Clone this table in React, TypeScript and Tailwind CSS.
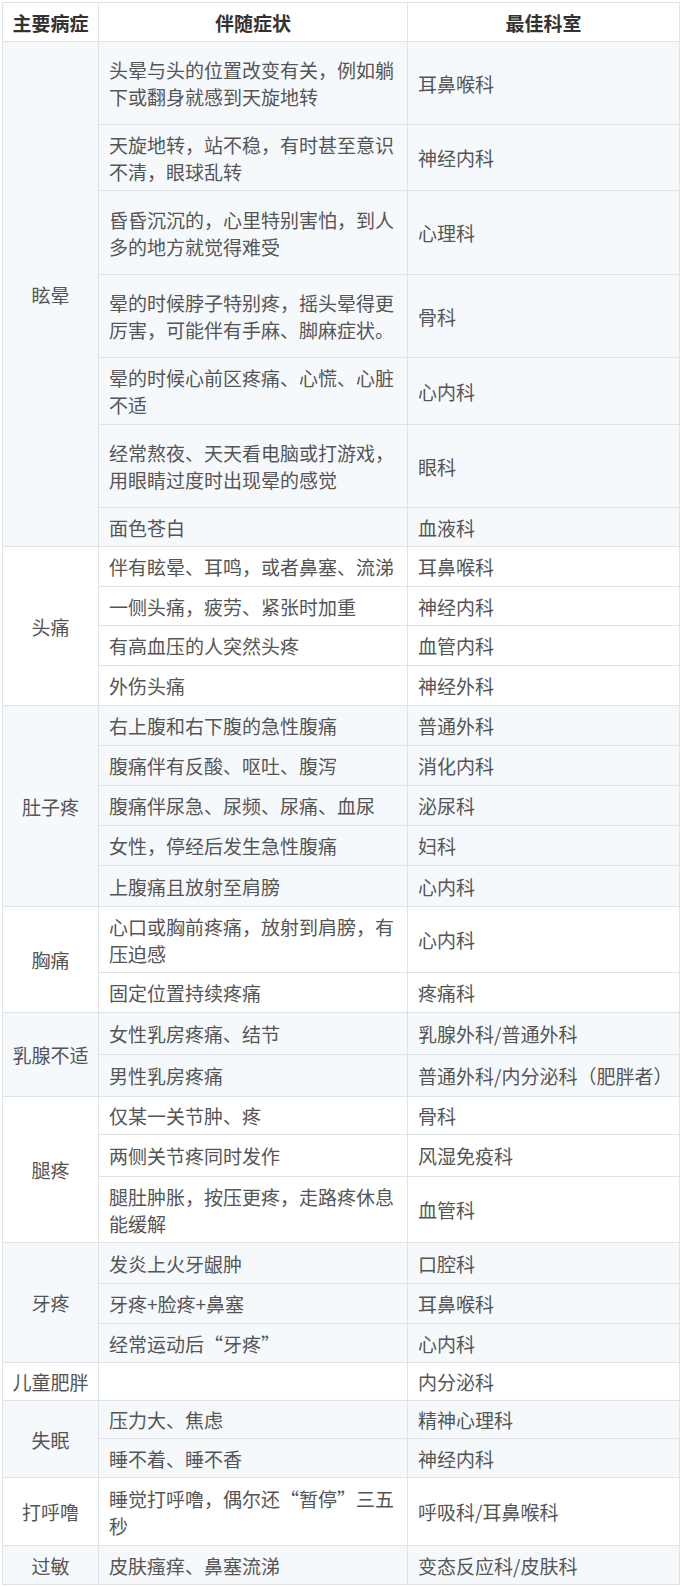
import React from 'react';

type Row = { symptom: string; dept: string; h: number };
type Group = { name: string; rows: Row[] };

const groups: Group[] = [
  {
    name: '眩晕',
    rows: [
      { symptom: '头晕与头的位置改变有关，例如躺下或翻身就感到天旋地转', dept: '耳鼻喉科', h: 83 },
      { symptom: '天旋地转，站不稳，有时甚至意识不清，眼球乱转', dept: '神经内科', h: 66 },
      { symptom: '昏昏沉沉的，心里特别害怕，到人多的地方就觉得难受', dept: '心理科', h: 84 },
      { symptom: '晕的时候脖子特别疼，摇头晕得更厉害，可能伴有手麻、脚麻症状。', dept: '骨科', h: 83 },
      { symptom: '晕的时候心前区疼痛、心慌、心脏不适', dept: '心内科', h: 67 },
      { symptom: '经常熬夜、天天看电脑或打游戏，用眼睛过度时出现晕的感觉', dept: '眼科', h: 83 },
      { symptom: '面色苍白', dept: '血液科', h: 39 },
    ],
  },
  {
    name: '头痛',
    rows: [
      { symptom: '伴有眩晕、耳鸣，或者鼻塞、流涕', dept: '耳鼻喉科', h: 40 },
      { symptom: '一侧头痛，疲劳、紧张时加重', dept: '神经内科', h: 39 },
      { symptom: '有高血压的人突然头疼', dept: '血管内科', h: 40 },
      { symptom: '外伤头痛', dept: '神经外科', h: 40 },
    ],
  },
  {
    name: '肚子疼',
    rows: [
      { symptom: '右上腹和右下腹的急性腹痛', dept: '普通外科', h: 40 },
      { symptom: '腹痛伴有反酸、呕吐、腹泻', dept: '消化内科', h: 40 },
      { symptom: '腹痛伴尿急、尿频、尿痛、血尿', dept: '泌尿科', h: 40 },
      { symptom: '女性，停经后发生急性腹痛', dept: '妇科', h: 40 },
      { symptom: '上腹痛且放射至肩膀', dept: '心内科', h: 41 },
    ],
  },
  {
    name: '胸痛',
    rows: [
      { symptom: '心口或胸前疼痛，放射到肩膀，有压迫感', dept: '心内科', h: 66 },
      { symptom: '固定位置持续疼痛', dept: '疼痛科', h: 40 },
    ],
  },
  {
    name: '乳腺不适',
    rows: [
      { symptom: '女性乳房疼痛、结节', dept: '乳腺外科/普通外科', h: 42 },
      { symptom: '男性乳房疼痛', dept: '普通外科/内分泌科（肥胖者）', h: 42 },
    ],
  },
  {
    name: '腿疼',
    rows: [
      { symptom: '仅某一关节肿、疼', dept: '骨科', h: 38 },
      { symptom: '两侧关节疼同时发作', dept: '风湿免疫科', h: 42 },
      { symptom: '腿肚肿胀，按压更疼，走路疼休息能缓解', dept: '血管科', h: 66 },
    ],
  },
  {
    name: '牙疼',
    rows: [
      { symptom: '发炎上火牙龈肿', dept: '口腔科', h: 41 },
      { symptom: '牙疼+脸疼+鼻塞', dept: '耳鼻喉科', h: 40 },
      { symptom: '经常运动后“牙疼”', dept: '心内科', h: 39 },
    ],
  },
  {
    name: '儿童肥胖',
    rows: [{ symptom: '', dept: '内分泌科', h: 38 }],
  },
  {
    name: '失眠',
    rows: [
      { symptom: '压力大、焦虑', dept: '精神心理科', h: 38 },
      { symptom: '睡不着、睡不香', dept: '神经内科', h: 39 },
    ],
  },
  {
    name: '打呼噜',
    rows: [{ symptom: '睡觉打呼噜，偶尔还“暂停”三五秒', dept: '呼吸科/耳鼻喉科', h: 68 }],
  },
  {
    name: '过敏',
    rows: [{ symptom: '皮肤瘙痒、鼻塞流涕', dept: '变态反应科/皮肤科', h: 39 }],
  },
];

const cell = 'border border-[#dfe3e8] align-middle';

export default function App() {
  return (
    <div
      className="bg-white pt-[2px] pl-[2px] min-h-[1587px]"
      style={{ fontFamily: '"Noto Sans CJK SC", "Noto Sans", sans-serif' }}
    >
      <table className="w-[677px] border-collapse table-fixed text-[19px] leading-[27px] text-[#555]">
        <colgroup>
          <col className="w-[96px]" />
          <col className="w-[309px]" />
          <col className="w-[272px]" />
        </colgroup>
        <thead>
          <tr className="h-[39px] bg-white">
            <th className={`${cell} font-bold text-[#333] text-center`}>主要病症</th>
            <th className={`${cell} font-bold text-[#333] text-center`}>伴随症状</th>
            <th className={`${cell} font-bold text-[#333] text-center`}>最佳科室</th>
          </tr>
        </thead>
        <tbody>
          {groups.map((g, gi) =>
            g.rows.map((r, ri) => (
              <tr
                key={`${gi}-${ri}`}
                className={gi % 2 === 0 ? 'bg-[#f6f9fc]' : 'bg-white'}
                style={{ height: r.h }}
              >
                {ri === 0 && (
                  <td rowSpan={g.rows.length} className={`${cell} text-center px-1`}>
                    {g.name}
                  </td>
                )}
                <td className={`${cell} px-[10px]`}>{r.symptom}</td>
                <td className={`${cell} px-[10px]`}>{r.dept}</td>
              </tr>
            ))
          )}
        </tbody>
      </table>
    </div>
  );
}
